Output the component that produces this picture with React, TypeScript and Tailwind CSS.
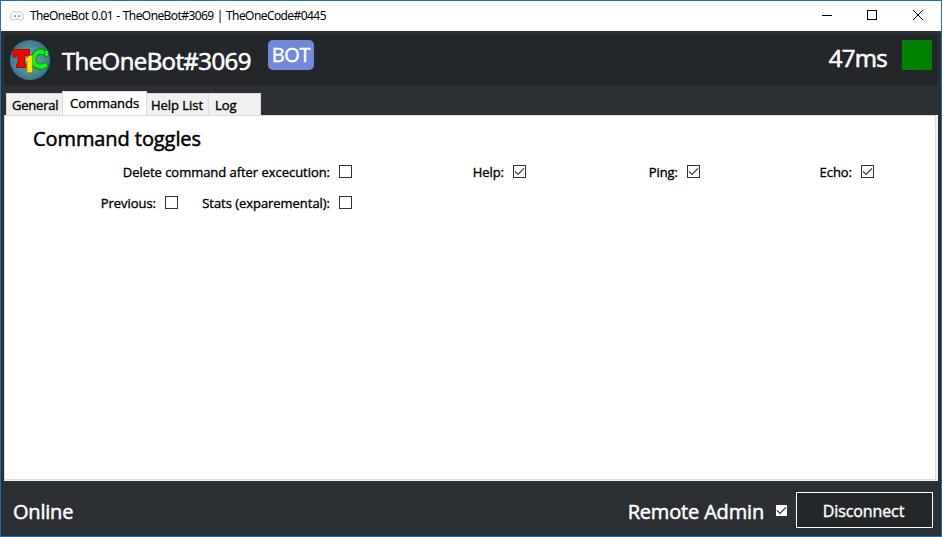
import type { ReactNode } from "react";

function Check({ checked = false, plain = false }: { checked?: boolean; plain?: boolean }) {
  return (
    <span
      role="checkbox"
      aria-checked={checked}
      className={
        plain
          ? "block h-[11px] w-[11px] shrink-0 bg-white"
          : "block h-[13px] w-[13px] shrink-0 border border-[#333333] bg-white"
      }
    >
      {checked && (
        <svg viewBox="0 0 11 11" className="block h-[11px] w-[11px]" fill="none" stroke="#333" strokeWidth="1.2">
          <path d="M1 5.3 4 8.3 10 2.3" />
        </svg>
      )}
    </span>
  );
}

function Toggle({ children, checked }: { children: ReactNode; checked?: boolean }) {
  return (
    <label className="flex h-[18px] items-center justify-end gap-[9px] whitespace-nowrap text-[13px] leading-[18px] tracking-[-0.04px]">
      <span className="pt-[2px]">{children}</span>
      <Check checked={checked} />
    </label>
  );
}

function Avatar() {
  return (
    <svg viewBox="0 0 40 40" className="mt-[6px] h-10 w-10 shrink-0">
      <defs>
        <radialGradient id="globe">
          <stop offset="0" stopColor="#6fae8c" />
          <stop offset="0.6" stopColor="#558f93" />
          <stop offset="1" stopColor="#3b7592" />
        </radialGradient>
      </defs>
      <circle cx="20" cy="20" r="20" fill="url(#globe)" />
      <path d="M3 9.500h16.500v6.500h-3.500l-.5-1.500h-1v9.500h1.500v3.500H6.500V24H8v-9.500H6.500L6 17H3Z" fill="#f00" stroke="#8c1010" strokeWidth="0.9" />
      <g fill="none">
        <path d="M37 14.500C33 9.500 24 11 23.500 19.500c0 8 9.500 9.500 13.500 4" stroke="#087b1a" strokeWidth="6" />
        <path d="M36.500 14C32.500 9.500 24 11.500 23.500 19.500c0 7.500 9 9 13 4.500" stroke="#0ef516" strokeWidth="4.300" />
        <path d="M36.500 10v6.500" stroke="#087b1a" strokeWidth="4.500" />
        <path d="M36.500 10.800v5" stroke="#0ef516" strokeWidth="3" />
      </g>
      <path d="M15.500 19l4-3.500h3v17h-5.500v-11.500h-1.500Z" fill="#ffe600" stroke="#a38b10" strokeWidth="0.9" />
    </svg>
  );
}

export default function App() {
  return (
    <div className="flex h-[537px] w-[942px] flex-col overflow-hidden border border-[#186fb5] bg-[#2c2f33] font-['Open_Sans','Noto_Sans',sans-serif] font-medium text-black [-webkit-text-stroke:0.35px]">
      <header className="flex h-[30px] shrink-0 items-center bg-white pl-[9px]">
        <svg viewBox="0 0 14 12" className="h-3 w-[14px]" fill="none" stroke="#bcc5ea" strokeWidth="1">
          <path d="M4.500 1.500C2 1.700 1.500 2.500.8 6 .4 9 .8 9.800 3.500 10.500l1-1.200h5l1 1.200c2.700-.7 3.100-1.500 2.700-4.500-.7-3.500-1.200-4.300-3.700-4.500L9 2.200H5Z" />
          <circle cx="4.9" cy="6.2" r="1.1" fill="#8793d3" stroke="none" />
          <circle cx="9.1" cy="6.2" r="1.1" fill="#8793d3" stroke="none" />
        </svg>
        <span className="ml-[6px] flex-1 whitespace-nowrap text-[12px] font-normal tracking-[-0.55px] [word-spacing:0.6px] [-webkit-text-stroke:0.1px]">
          TheOneBot 0.01 - TheOneBot#3069 | TheOneCode#0445
        </span>
        <svg viewBox="0 0 120 30" className="h-[30px] w-[120px]" fill="none" stroke="#000" shapeRendering="crispEdges">
          <path d="M1 14.5h10M46.5 9.5h9v9h-9Z" />
          <path d="m92 9 10 10m0-10L92 19" shapeRendering="auto" />
        </svg>
      </header>

      <section className="mx-[3px] mt-[3px] flex h-[51px] shrink-0 bg-[#23272a] pl-[6px] text-white [-webkit-text-stroke:0.6px]">
        <Avatar />
        <h1 className="ml-3 mt-[11px] w-[206px] whitespace-nowrap text-[24px] leading-[32px] tracking-[-0.6px]">TheOneBot#3069</h1>
        <span className="mt-[6px] flex h-[30px] w-[46px] items-center justify-center rounded-[5px] bg-[#7289da] text-[20px] leading-[30px] tracking-[-0.4px] [-webkit-text-stroke:0.35px]">BOT</span>
        <span className="ml-auto mt-[8px] whitespace-nowrap text-[24px] leading-[32px] tracking-[-0.7px]">47ms</span>
        <span className="ml-[15px] mr-[6px] mt-[6px] h-[30px] w-[30px] bg-[#008000]" />
      </section>

      <nav className="ml-[5px] mt-[6px] flex h-6 shrink-0 items-end text-[13px] leading-[18px]">
        <span className="h-[22px] w-[56px] whitespace-nowrap border-l border-t border-[#d9d9d9] bg-[#f0f0f0] pl-[5px] pt-[2px] tracking-[-0.2px]">General</span>
        <span className="h-6 w-[85px] whitespace-nowrap border-x border-t border-[#d9d9d9] bg-white pl-[7px] pt-[2px] tracking-[-0.04px]">Commands</span>
        <span className="h-[22px] w-[61px] whitespace-nowrap border-t border-[#d9d9d9] bg-[#f0f0f0] pl-1 pt-[2px] tracking-[-0.04px]">Help List</span>
        <span className="h-[22px] w-[53px] whitespace-nowrap border-x border-t border-[#d9d9d9] bg-[#f0f0f0] pl-[6px] pt-[2px]">Log</span>
      </nav>

      <main className="mx-[3px] h-[366px] shrink-0 border-b border-r-2 border-[#f4f4f4] bg-white">
        <div className="h-[365px] border border-[#dcdcdc]">
          <h2 className="ml-7 mt-[9px] text-[20px] leading-7 tracking-[-0.08px] [-webkit-text-stroke:0.5px]">Command toggles</h2>
          <div className="mt-[9px] grid grid-cols-[347px_174px_174px_174px]">
            <Toggle>Delete command after excecution:</Toggle>
            <Toggle checked>Help:</Toggle>
            <Toggle checked>Ping:</Toggle>
            <Toggle checked>Echo:</Toggle>
          </div>
          <div className="mt-[13px] grid grid-cols-[173px_174px]">
            <Toggle>Previous:</Toggle>
            <Toggle>Stats (exparemental):</Toggle>
          </div>
        </div>
      </main>

      <footer className="flex h-[54px] shrink-0 items-center pl-3 pr-2 text-white [-webkit-text-stroke:0.5px]">
        <span className="mt-[8px] text-[20px] leading-7 tracking-[-0.2px]">Online</span>
        <span className="ml-auto mr-3 mt-[8px] whitespace-nowrap text-[20px] leading-7 tracking-[-0.17px]">Remote Admin</span>
        <span className="mt-[5px]"><Check checked plain /></span>
        <button className="ml-[9px] mt-1 h-9 w-[137px] border border-white bg-[#23272a] pr-[2px] pt-[1px] text-[16px] leading-5 tracking-[-0.1px] [-webkit-text-stroke:0.4px]">Disconnect</button>
      </footer>
    </div>
  );
}
